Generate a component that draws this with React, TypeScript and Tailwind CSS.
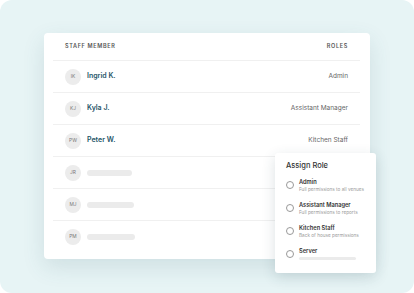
import React from 'react';

interface Staff {
  initials: string;
  name?: string;
  role?: string;
  barWidth?: number;
}

const staff: Staff[] = [
  { initials: 'IK', name: 'Ingrid K.', role: 'Admin' },
  { initials: 'KJ', name: 'Kyla J.', role: 'Assistant Manager' },
  { initials: 'PW', name: 'Peter W.', role: 'Kitchen Staff' },
  { initials: 'JR', barWidth: 45 },
  { initials: 'MJ', barWidth: 47 },
  { initials: 'PM', barWidth: 48 },
];

const roles = [
  { title: 'Admin', desc: 'Full permissions to all venues' },
  { title: 'Assistant Manager', desc: 'Full permissions to reports' },
  { title: 'Kitchen Staff', desc: 'Back of house permissions' },
  { title: 'Server', desc: '' },
];

const App = () => {
  return (
    <div
      className="relative w-[414px] h-[293px] bg-white overflow-hidden"
      style={{ fontFamily: 'Inter, "Noto Sans", sans-serif' }}
    >
      <div className="w-full h-full rounded-[12px] bg-[#e7f4f5] pt-[33px] pl-[44px]">
        <div className="w-[326px] h-[226px] bg-white rounded-[4px] shadow-[0_8px_22px_rgba(60,100,110,0.14)] px-[9px] pr-[10px]">
          <div className="flex items-center justify-between h-[28px] px-[12px] border-b border-[#f0f0f0] text-[5.5px] font-semibold tracking-[0.12em] text-[#555]">
            <span>STAFF MEMBER</span>
            <span>ROLES</span>
          </div>
          {staff.map((s, i) => (
            <div
              key={s.initials}
              className={`flex items-center justify-between h-[32px] px-[12px] ${i < staff.length - 1 ? 'border-b border-[#f0f0f0]' : ''}`}
            >
              <div className="flex items-center gap-[6px]">
                <div className="w-[16px] h-[16px] rounded-full bg-[#ececec] flex items-center justify-center text-[4.8px] text-[#777]">
                  {s.initials}
                </div>
                {s.name ? (
                  <span className="text-[7px] font-semibold text-[#1e5468]">{s.name}</span>
                ) : (
                  <div className="h-[6px] rounded-full bg-[#ebebeb]" style={{ width: s.barWidth }} />
                )}
              </div>
              {s.role && <span className="text-[6.5px] text-[#666]">{s.role}</span>}
            </div>
          ))}
        </div>
      </div>

      <div className="absolute left-[275px] top-[153px] w-[101px] h-[120px] bg-white rounded-[3px] shadow-[0_4px_14px_rgba(40,70,80,0.16)] pl-[11px] pt-[7px]">
        <div className="text-[7.5px] text-[#333] font-medium">Assign Role</div>
        <div className="flex flex-col gap-[7px] mt-[6px]">
          {roles.map((r) => (
            <div key={r.title} className="flex items-center gap-[5px] h-[16px]">
              <div className="w-[8px] h-[8px] rounded-full border border-[#999] bg-white shrink-0" />
              <div className="flex flex-col leading-none">
                <span className="text-[5.7px] font-semibold text-[#333]">{r.title}</span>
                {r.desc ? (
                  <span className="text-[4.7px] text-[#999] mt-[2px] whitespace-nowrap">{r.desc}</span>
                ) : (
                  <div className="w-[57px] h-[3px] rounded-full bg-[#ebebeb] mt-[3px]" />
                )}
              </div>
            </div>
          ))}
        </div>
      </div>
    </div>
  );
};

export default App;
